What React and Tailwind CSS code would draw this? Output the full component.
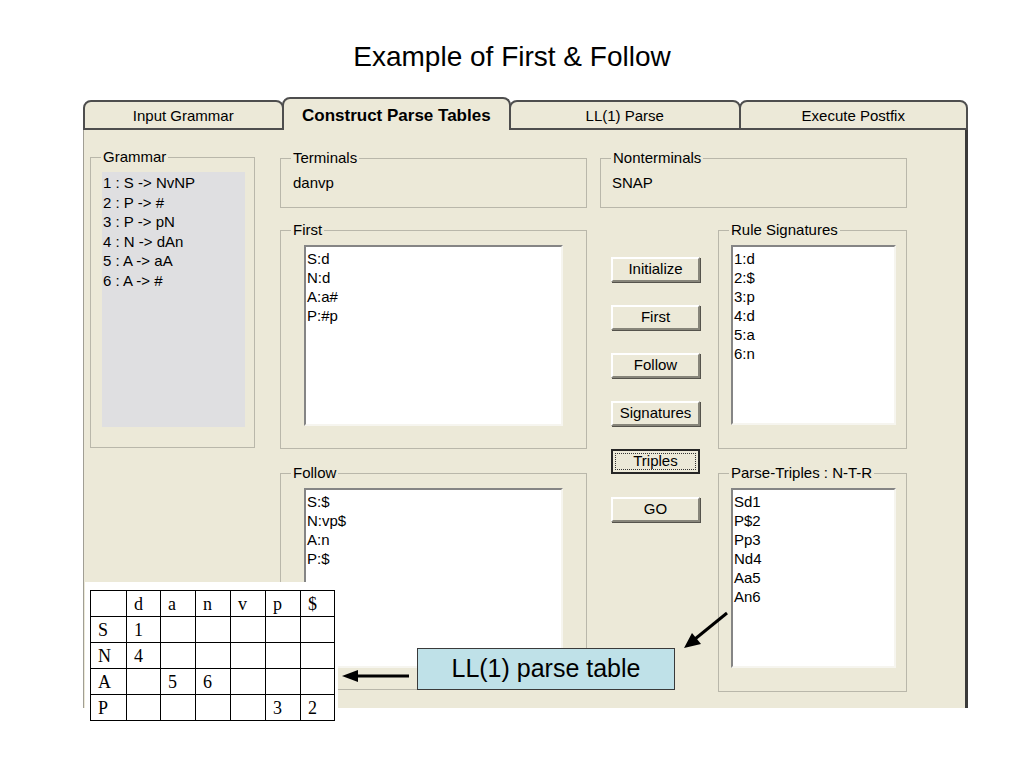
import React from "react";

const tabs = [
  { label: "Input Grammar", w: "w-[201px]" },
  { label: "Construct Parse Tables", w: "w-[230px]", active: true },
  { label: "LL(1) Parse", w: "w-[232px]" },
  { label: "Execute Postfix", w: "w-[230px]" },
];

const grammar = [
  "1 : S -> NvNP",
  "2 : P -> #",
  "3 : P -> pN",
  "4 : N -> dAn",
  "5 : A -> aA",
  "6 : A -> #",
];

const first = ["S:d", "N:d", "A:a#", "P:#p"];
const follow = ["S:$", "N:vp$", "A:n", "P:$"];
const signatures = ["1:d", "2:$", "3:p", "4:d", "5:a", "6:n"];
const triples = ["Sd1", "P$2", "Pp3", "Nd4", "Aa5", "An6"];
const buttons = ["Initialize", "First", "Follow", "Signatures", "Triples", "GO"];

const tableRows = [
  ["", "d", "a", "n", "v", "p", "$"],
  ["S", "1", "", "", "", "", ""],
  ["N", "4", "", "", "", "", ""],
  ["A", "", "5", "6", "", "", ""],
  ["P", "", "", "", "", "3", "2"],
];
const colWidths = ["w-[36px]", "w-[34px]", "w-[35px]", "w-[35px]", "w-[35px]", "w-[35px]", "w-[34px]"];

function Group({ label, className, children }) {
  return (
    <fieldset className={`border border-[#b9b7aa] ${className}`}>
      <legend className="ml-[10px] px-[2px] text-[15px] leading-[16px] text-black">
        {label}
      </legend>
      {children}
    </fieldset>
  );
}

function ListBox({ items, className }) {
  return (
    <div
      className={`bg-white border-2 border-t-[#858585] border-l-[#858585] border-b-[#f6f5ef] border-r-[#f6f5ef] pt-[2px] pl-[1px] text-[15px] leading-[19px] text-black ${className}`}
    >
      {items.map((t) => (
        <div key={t}>{t}</div>
      ))}
    </div>
  );
}

function XpButton({ label }) {
  if (label === "Triples") {
    return (
      <button className="w-[89px] h-[25px] bg-[#ece9d8] border-2 border-[#262626] p-[2px] flex text-[15px] text-black">
        <span className="flex-1 flex items-center justify-center border border-dotted border-[#333]">
          {label}
        </span>
      </button>
    );
  }
  return (
    <button className="w-[89px] h-[25px] bg-[#ece9d8] border-2 border-t-white border-l-white border-r-[#87857a] border-b-[#87857a] shadow-[1px_1px_0_#55534c] flex items-center justify-center text-[15px] text-black">
      {label}
    </button>
  );
}

export default function App() {
  return (
    <div className="relative w-[1024px] h-[768px] bg-white overflow-hidden font-['Liberation_Sans',Arial,sans-serif] text-black">
      {/* Title */}
      <div className="h-[98px] pt-[42px] text-center text-[28px] leading-[30px]">
        Example of First &amp; Follow
      </div>

      {/* Window */}
      <div className="ml-[83px] w-[885px]">
        {/* Tabs */}
        <div className="flex items-end h-[32px]">
          {tabs.map((t, i) =>
            t.active ? (
              <div
                key={t.label}
                className={`${t.w} -ml-[2px] relative z-10 h-[33px] bg-[#ece9d8] border-2 border-b-0 border-[#4e4e4e] rounded-t-[8px] flex items-center justify-center pt-[2px] text-[17px] font-bold`}
              >
                {t.label}
              </div>
            ) : (
              <div
                key={t.label}
                className={`${t.w} ${i > 0 ? "-ml-[2px]" : ""} h-[30px] bg-[#ece9d8] border-2 border-[#4e4e4e] rounded-t-[8px] flex items-center justify-center pt-[2px] text-[15px]`}
              >
                {t.label}
              </div>
            )
          )}
        </div>

        {/* Panel */}
        <div className="h-[578px] bg-[#ece9d8] border-l border-l-[#a09e94] border-r-[3px] border-r-[#3a3a3a] pl-[6px] pt-[19px] flex gap-[25px]">
          <Group label="Grammar" className="w-[165px] h-[299px] pt-[7px]">
            <div className="ml-[11px] w-[143px] h-[255px] bg-[#dfdfe1] pt-[1px] pl-[1px] text-[15px] leading-[19.5px]">
              {grammar.map((g) => (
                <div key={g}>{g}</div>
              ))}
            </div>
          </Group>

          <div className="w-[627px] mt-[1px] flex flex-col">
            <div className="flex gap-[13px]">
              <Group label="Terminals" className="w-[307px] h-[58px]">
                <div className="pl-[12px] mt-[8px] text-[15px] leading-[18px]">danvp</div>
              </Group>
              <Group label="Nonterminals" className="w-[307px] h-[58px]">
                <div className="pl-[11px] mt-[8px] text-[15px] leading-[18px]">SNAP</div>
              </Group>
            </div>

            <div className="mt-[14px] flex">
              <div className="w-[307px] flex flex-col gap-[16px]">
                <Group label="First" className="h-[227px] pt-[7px]">
                  <ListBox items={first} className="ml-[23px] w-[259px] h-[181px]" />
                </Group>
                <Group label="Follow" className="h-[225px] pt-[7px]">
                  <ListBox items={follow} className="ml-[23px] w-[259px] h-[180px]" />
                </Group>
              </div>

              <div className="w-[131px] pl-[24px] pt-[35px] flex flex-col gap-[23px]">
                {buttons.map((b) => (
                  <XpButton key={b} label={b} />
                ))}
              </div>

              <div className="w-[189px] flex flex-col gap-[16px]">
                <Group label="Rule Signatures" className="h-[227px] pt-[7px]">
                  <ListBox items={signatures} className="ml-[12px] w-[165px] h-[180px]" />
                </Group>
                <Group label="Parse-Triples : N-T-R" className="h-[227px] pt-[7px]">
                  <ListBox items={triples} className="ml-[12px] w-[165px] h-[180px]" />
                </Group>
              </div>
            </div>
          </div>
        </div>
      </div>

      {/* Pasted LL(1) table */}
      <div className="absolute left-[85px] top-[582px] w-[253px] h-[186px] bg-white pl-[5px] pt-[8px]">
        <table className="border-collapse table-fixed font-['Liberation_Serif',serif] text-[18px]">
          <tbody>
            {tableRows.map((row, r) => (
              <tr key={r} className="h-[26px]">
                {row.map((c, ci) => (
                  <td
                    key={ci}
                    className={`${colWidths[ci]} border border-black pl-[7px] p-0 leading-[24px] align-middle`}
                  >
                    {c}
                  </td>
                ))}
              </tr>
            ))}
          </tbody>
        </table>
      </div>

      {/* Callout */}
      <div className="absolute left-[417px] top-[648px] w-[258px] h-[42px] bg-[#bfe1e8] border border-[#3a3a3a] flex items-center justify-center text-[25px]">
        LL(1) parse table
      </div>

      {/* Arrows */}
      <svg className="absolute left-0 top-0" width="1024" height="768" viewBox="0 0 1024 768">
        <line x1="409" y1="676" x2="356" y2="676" stroke="#000" strokeWidth="3" />
        <polygon points="342,676 358,670 358,682" fill="#000" />
        <line x1="727" y1="613" x2="695" y2="639" stroke="#000" strokeWidth="3" />
        <polygon points="684,648 692,633 701,644" fill="#000" />
      </svg>
    </div>
  );
}
